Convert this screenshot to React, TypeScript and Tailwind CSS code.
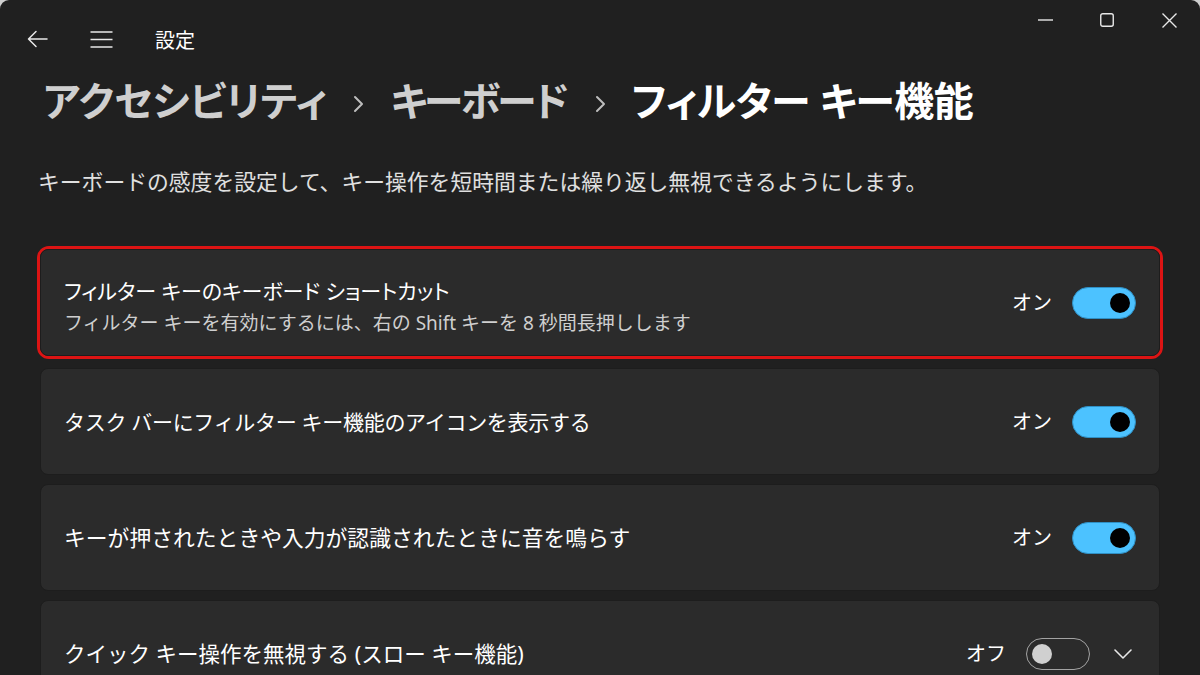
import React from "react";

const font = "font-['Noto_Sans','Noto_Sans_CJK_JP',sans-serif]";
const palt = "[font-feature-settings:'palt']";

function Toggle({ on }: { on: boolean }) {
  if (on) {
    return (
      <div className="w-[64px] h-[32px] rounded-full bg-[#4cc2ff] border border-[#2f8fc4] flex items-center justify-end pr-[5px]">
        <div className="w-[20px] h-[20px] rounded-full bg-black" />
      </div>
    );
  }
  return (
    <div className="w-[64px] h-[32px] rounded-full border-[1.5px] border-[#a3a3a3] flex items-center pl-[5px]">
      <div className="w-[20px] h-[20px] rounded-full bg-[#d0d0d0]" />
    </div>
  );
}

function Card({
  title,
  sub,
  on,
  chevron,
  textPad = 0,
  titleClass = "text-[21px]",
}: {
  title: string;
  sub?: string;
  on: boolean;
  chevron?: boolean;
  textPad?: number;
  titleClass?: string;
}) {
  return (
    <div className="h-[107px] rounded-[8px] bg-[#2b2b2b] border border-[#1d1d1d] flex items-center pl-[23px] pr-[23px] shrink-0">
      <div className={"flex-1 flex flex-col " + (textPad ? "mt-[8px]" : "")}>
        <div className={"leading-[28px] text-white " + titleClass}>{title}</div>
        {sub && <div className="mt-[5px] text-[19px] leading-[26px] text-[#cfcfcf]">{sub}</div>}
      </div>
      <div className="flex items-center">
        <span className="text-[20px] text-white mr-[20px]">{on ? "オン" : "オフ"}</span>
        <Toggle on={on} />
        {chevron && (
          <svg className="ml-[24px] mr-[4px]" width="18" height="10" viewBox="0 0 18 10" fill="none">
            <path d="M1 1 L9 9 L17 1" stroke="#e8e8e8" strokeWidth="1.6" strokeLinecap="round" strokeLinejoin="round" />
          </svg>
        )}
      </div>
    </div>
  );
}

export default function App() {
  return (
    <div className={"w-[1200px] h-[675px] overflow-hidden bg-[#cfcfcf] " + font}>
      <div className="w-full h-full bg-[#202020] rounded-t-[9px] flex flex-col">
        {/* title bar */}
        <div className="h-[56px] flex items-start shrink-0">
          <div className="flex items-center mt-[26px] h-[26px]">
            <svg className="ml-[27px]" width="21" height="18" viewBox="0 0 21 18" fill="none">
              <path d="M20 9 H2 M9 1.5 L1.5 9 L9 16.5" stroke="#e8e8e8" strokeWidth="1.5" strokeLinecap="round" strokeLinejoin="round" />
            </svg>
            <svg className="ml-[42px]" width="23" height="17" viewBox="0 0 23 17" fill="none">
              <path d="M0.5 1 H22.5 M0.5 8.5 H22.5 M0.5 16 H22.5" stroke="#e8e8e8" strokeWidth="1.5" />
            </svg>
            <span className="ml-[42px] text-[20px] leading-[26px] text-white mt-[3px]">設定</span>
          </div>
          <div className="ml-auto flex items-center h-[40px]">
            <div className="w-[62px] flex justify-center">
              <svg width="15" height="2" viewBox="0 0 15 2"><path d="M0 1 H15" stroke="#e8e8e8" strokeWidth="1.4" /></svg>
            </div>
            <div className="w-[62px] flex justify-center">
              <svg width="14" height="14" viewBox="0 0 14 14" fill="none"><rect x="0.75" y="0.75" width="12.5" height="12.5" rx="2" stroke="#e8e8e8" strokeWidth="1.4" /></svg>
            </div>
            <div className="w-[62px] flex justify-center">
              <svg width="15" height="15" viewBox="0 0 15 15" fill="none"><path d="M0.5 0.5 L14.5 14.5 M14.5 0.5 L0.5 14.5" stroke="#e8e8e8" strokeWidth="1.4" /></svg>
            </div>
          </div>
        </div>

        {/* breadcrumb */}
        <div className={"mt-[21px] ml-[43px] flex items-center h-[48px] text-[40px] leading-[48px] font-semibold shrink-0 " + palt}>
          <span className="text-[#cfcfcf]">アクセシビリティ</span>
          <svg className="mx-[26px] mt-[6px]" width="11" height="18" viewBox="0 0 11 18" fill="none">
            <path d="M2 2 L9 9 L2 16" stroke="#bdbdbd" strokeWidth="2" strokeLinecap="round" strokeLinejoin="round" />
          </svg>
          <span className="text-[#cfcfcf] tracking-[-2.5px]">キーボード</span>
          <svg className="ml-[28px] mr-[26px] mt-[6px]" width="11" height="18" viewBox="0 0 11 18" fill="none">
            <path d="M2 2 L9 9 L2 16" stroke="#bdbdbd" strokeWidth="2" strokeLinecap="round" strokeLinejoin="round" />
          </svg>
          <span className="text-white tracking-[-0.5px]">フィルター キー機能</span>
        </div>

        {/* description */}
        <div className="mt-[42px] ml-[38px] text-[21.8px] leading-[30px] text-[#e0e0e0] shrink-0">
          キーボードの感度を設定して、キー操作を短時間または繰り返し無視できるようにします。
        </div>

        {/* cards */}
        <div className="mt-[49px] flex flex-col gap-[9px]">
          <div className="mx-[37px] border-[3px] border-[#dc1414] rounded-[12px]">
            <Card
              title="フィルター キーのキーボード ショートカット"
              sub="フィルター キーを有効にするには、右の Shift キーを 8 秒間長押しします"
              on={true}
              textPad={1}
              titleClass={"text-[21px] " + palt}
            />
          </div>
          <div className="mx-[40px] flex flex-col gap-[9px]">
            <Card title="タスク バーにフィルター キー機能のアイコンを表示する" on={true} titleClass="text-[21px] tracking-[-0.3px]" />
            <Card title="キーが押されたときや入力が認識されたときに音を鳴らす" on={true} titleClass="text-[21.8px]" />
            <Card title="クイック キー操作を無視する (スロー キー機能)" on={false} chevron titleClass="text-[21.5px]" />
          </div>
        </div>
      </div>
    </div>
  );
}
